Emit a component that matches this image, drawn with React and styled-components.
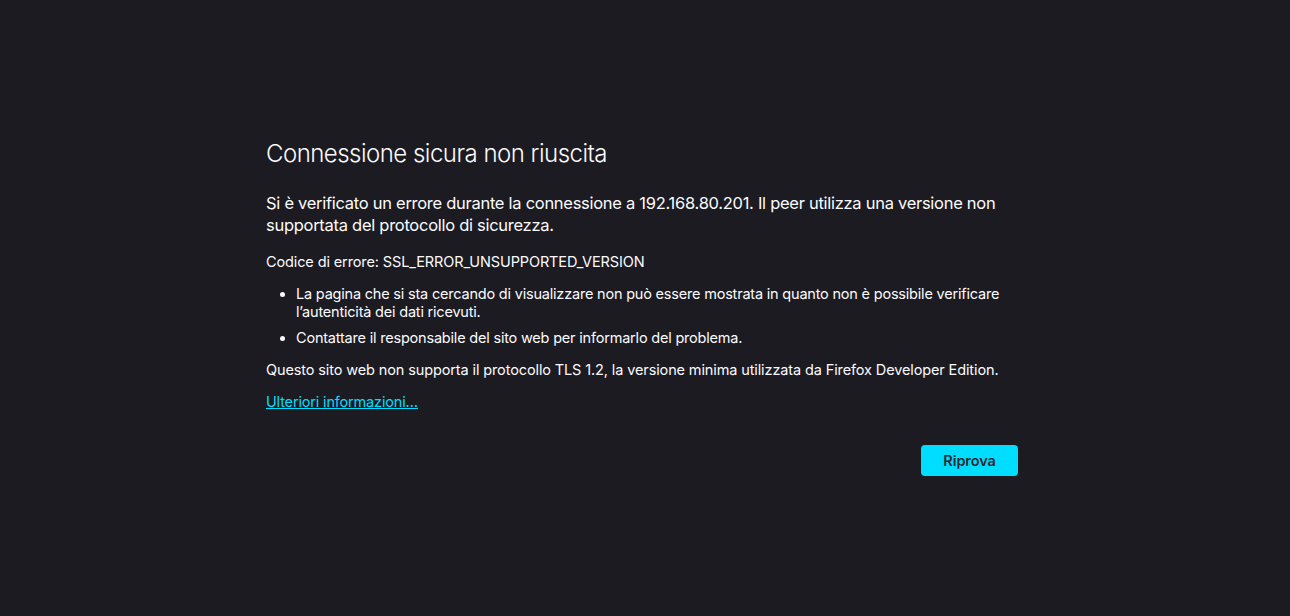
import React from 'react';
import styled, { createGlobalStyle } from 'styled-components';

const Global = createGlobalStyle`
  html, body {
    margin: 0;
    padding: 0;
    background: #1c1b22;
  }
  body {
    font-family: Inter, "Noto Sans", sans-serif;
    color: #fbfbfe;
    -webkit-font-smoothing: antialiased;
  }
`;

const Page = styled.main`
  min-height: 616px;
  box-sizing: border-box;
  padding-top: 137px;
  display: flex;
  justify-content: center;
`;

const Container = styled.div`
  width: 752px;
  margin-right: 6px;
`;

const Title = styled.h1`
  margin: 0 0 21px;
  font-size: 24px;
  font-weight: 300;
  line-height: 34px;
  letter-spacing: -0.52px;
`;

const Lead = styled.p`
  margin: 0 0 17px;
  font-size: 16.5px;
  line-height: 22px;
  letter-spacing: -0.28px;
`;

const Text = styled.p`
  margin: 0 0 ${p => p.gap || 14}px;
  font-size: 14.5px;
  line-height: 18px;
  letter-spacing: -0.12px;
`;

const List = styled.ul`
  margin: 0 0 14px;
  padding-left: 30px;
  font-size: 14.5px;
  line-height: 18px;
  letter-spacing: -0.2px;
`;

const Item = styled.li`
  margin-bottom: 8px;
  &:last-child {
    margin-bottom: 0;
  }
`;

const Link = styled.a`
  color: #00ddff;
  font-size: 14.5px;
  line-height: 18px;
  letter-spacing: -0.17px;
  text-decoration: underline;
  cursor: pointer;
`;

const Actions = styled.div`
  display: flex;
  justify-content: flex-end;
  margin-top: 34px;
`;

const Button = styled.button`
  width: 97px;
  height: 31px;
  border: none;
  border-radius: 4px;
  background: #00ddff;
  color: #2b2a33;
  font-family: inherit;
  font-size: 14.5px;
  font-weight: 600;
  letter-spacing: -0.1px;
  cursor: pointer;
`;

export default function App() {
  return (
    <>
      <Global />
      <Page>
        <Container>
          <Title>Connessione sicura non riuscita</Title>
          <Lead>
            Si è verificato un errore durante la connessione a 192.168.80.201. Il peer utilizza una versione non supportata del protocollo di sicurezza.
          </Lead>
          <Text>Codice di errore: SSL_ERROR_UNSUPPORTED_VERSION</Text>
          <List>
            <Item>La pagina che si sta cercando di visualizzare non può essere mostrata in quanto non è possibile verificare l’autenticità dei dati ricevuti.</Item>
            <Item>Contattare il responsabile del sito web per informarlo del problema.</Item>
          </List>
          <Text gap={12}>Questo sito web non supporta il protocollo TLS 1.2, la versione minima utilizzata da Firefox Developer Edition.</Text>
          <Link href="#">Ulteriori informazioni…</Link>
          <Actions>
            <Button>Riprova</Button>
          </Actions>
        </Container>
      </Page>
    </>
  );
}
